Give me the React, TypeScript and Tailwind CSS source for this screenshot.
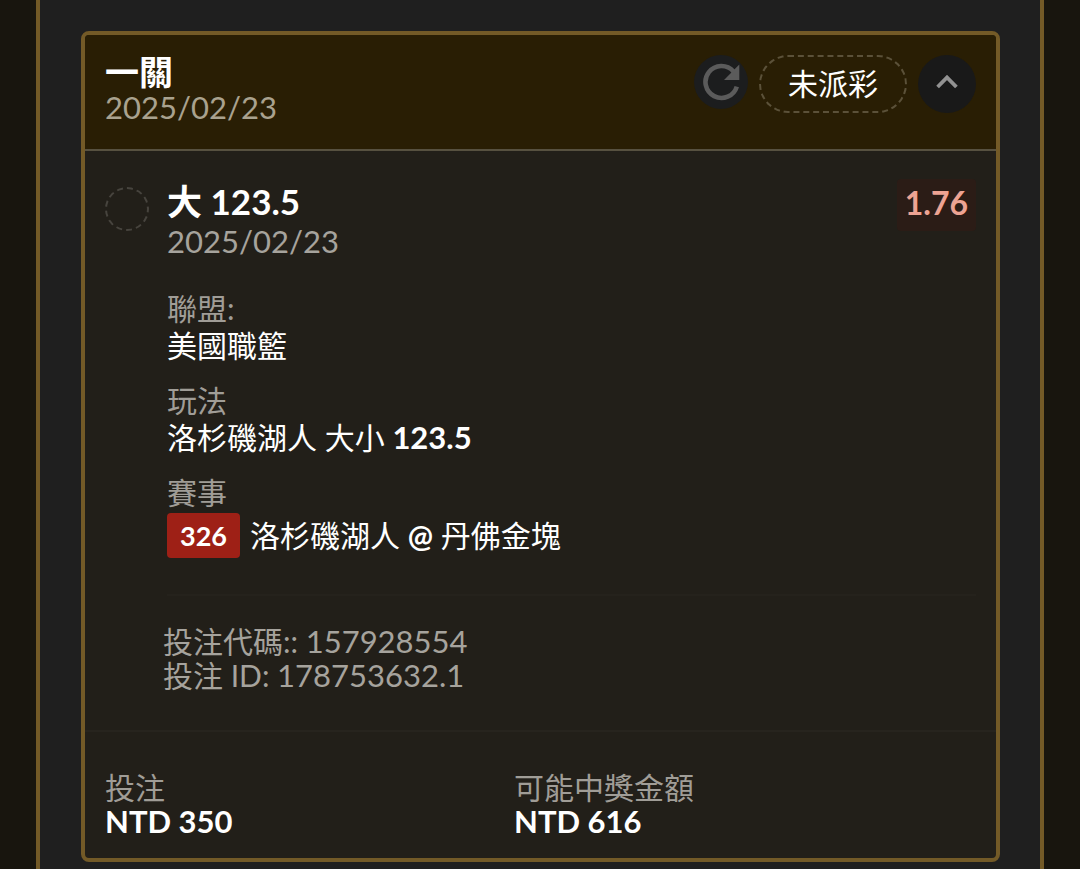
import React, { useState } from 'react';

interface Leg {
    id: number;
    pick: string;
    line: string;
    odds: string;
    date: string;
    league: string;
    market: string;
    matchNo: string;
    home: string;
    away: string;
}

const legs: Leg[] = [
    {
        id: 1,
        pick: '大',
        line: '123.5',
        odds: '1.76',
        date: '2025/02/23',
        league: '美國職籃',
        market: '洛杉磯湖人 大小',
        matchNo: '326',
        home: '洛杉磯湖人',
        away: '丹佛金塊',
    },
];

const bet = {
    title: '一關',
    date: '2025/02/23',
    status: '未派彩',
    code: '157928554',
    betId: '178753632.1',
    stake: 'NTD 350',
    payout: 'NTD 616',
};

const ReloadIcon = () => (
    <svg width="38" height="38" viewBox="0 0 38 38" fill="none" aria-hidden="true">
        <path d="M34.8 23.6A16 16 0 1 1 31.5 8.4" stroke="#5b5b5b" strokeWidth="4.6" />
        <path d="M37.3 1.5V17H22z" fill="#5b5b5b" />
    </svg>
);

const ChevronIcon = ({ open }: { open: boolean }) => (
    <svg width="22" height="16" viewBox="0 0 22 16" fill="none" className={open ? '' : 'rotate-180'} aria-hidden="true">
        <path d="M1.6 13 11 3.4 20.4 13" stroke="#929292" strokeWidth="3.8" />
    </svg>
);

const LegDetails = ({ leg }: { leg: Leg }) => (
    <section className="flex items-start gap-[18px]">
        <span className="mt-2 size-11 shrink-0 rounded-full border-2 border-dashed border-[#47443e]" />
        <div className="flex-1">
            <div className="flex items-start justify-between">
                <div>
                    <h3 className="text-[35px] leading-[44px] font-bold text-white">{leg.pick} {leg.line}</h3>
                    <p className="text-[31px] leading-9 text-[#a6a39d]">{leg.date}</p>
                </div>
                <span className="rounded-sm bg-[#2b1c16] px-2 pt-1 pb-2 text-[32px] leading-10 font-bold text-[#eda393]">{leg.odds}</span>
            </div>

            <dl className="mt-[31px] text-[30px] leading-[37px] text-white">
                <dt className="text-[#a09d97]">聯盟:</dt>
                <dd className="mb-[18px]">{leg.league}</dd>
                <dt className="text-[#a09d97]">玩法</dt>
                <dd className="mb-[18px]">{leg.market} <b className="text-[31px]">{leg.line}</b></dd>
                <dt className="text-[#a09d97]">賽事</dt>
                <dd className="mt-[2px] flex items-center gap-[10px]">
                    <span className="rounded-sm bg-[#9e2016] px-[13px] text-[27px] leading-[45px] font-bold">{leg.matchNo}</span>
                    <span>{leg.home} <b>@</b> {leg.away}</span>
                </dd>
            </dl>
        </div>
    </section>
);

export default function App() {
    const [open, setOpen] = useState(true);

    return (
        <div className="min-h-screen bg-[#18150e] px-9 font-['Lato','Noto_Sans_CJK_TC',sans-serif]">
            <main className="min-h-screen border-x-4 border-[#735a27] bg-[#1f1f1f] pt-[31px] pr-10 pb-[7px] pl-[41px]">
                <article className="overflow-hidden rounded-lg border-4 border-[#735a27] bg-[#221f19]">
                    <header className="flex items-start justify-between border-b-2 border-[#575140] bg-[#291e04] px-5 pt-5 pb-6">
                        <div>
                            <h2 className="text-[34px] leading-[34px] font-bold text-white">{bet.title}</h2>
                            <p className="text-[31px] leading-9 text-[#a9a28f]">{bet.date}</p>
                        </div>
                        <div className="flex items-start gap-[11px]">
                            <button className="flex size-[54px] items-center justify-center rounded-full bg-[#1c1d1e]" aria-label="重新整理">
                                <ReloadIcon />
                            </button>
                            <span className="rounded-full border-2 border-dashed border-[#5b5139] px-[27px] pb-[2px] text-[30px] leading-[52px] text-white">{bet.status}</span>
                            <button
                                className="flex size-[58px] items-center justify-center rounded-full bg-[#191919] pb-1"
                                aria-label="收合"
                                aria-expanded={open}
                                onClick={() => setOpen(!open)}
                            >
                                <ChevronIcon open={open} />
                            </button>
                        </div>
                    </header>

                    {open && (
                        <div className="px-5 pt-7 pb-[38px]">
                            {legs.map(leg => (
                                <LegDetails key={leg.id} leg={leg} />
                            ))}
                            <div className="mt-9 ml-[62px] border-t-2 border-[#25221c]" />
                            <div className="mt-7 ml-[58px] text-[30px] leading-[34px] text-[#a6a39d]">
                                <p>投注代碼:: <span className="text-[31px]">{bet.code}</span></p>
                                <p>投注 ID: <span className="text-[31px]">{bet.betId}</span></p>
                            </div>
                        </div>
                    )}

                    <dl className="grid grid-cols-[409px_1fr] border-t-2 border-[#27241e] px-5 pt-[38px] pb-5 text-[30px] leading-[34px]">
                        <div>
                            <dt className="text-[#a09d97]">投注</dt>
                            <dd className="text-[31px] font-bold text-white">{bet.stake}</dd>
                        </div>
                        <div>
                            <dt className="text-[#a09d97]">可能中獎金額</dt>
                            <dd className="text-[31px] font-bold text-white">{bet.payout}</dd>
                        </div>
                    </dl>
                </article>
            </main>
        </div>
    );
}
